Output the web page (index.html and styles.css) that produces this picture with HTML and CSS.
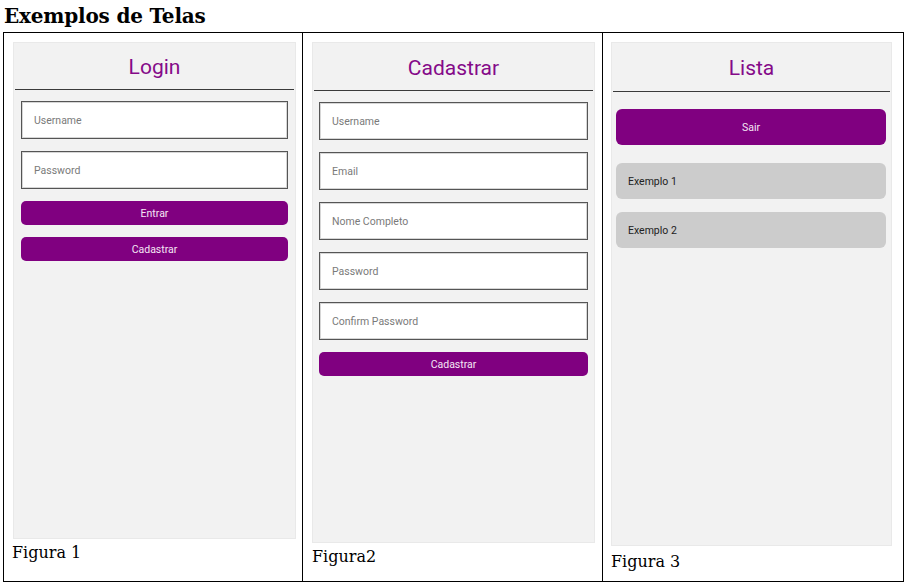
FILE: index.html
```html
<!DOCTYPE html>
<html lang="pt">
<head>
<meta charset="utf-8">
<title>Exemplos de Telas</title>
<link rel="stylesheet" href="styles.css">
</head>
<body>
<h1 class="title">Exemplos de Telas</h1>
<div class="table">
  <div class="cell cell-1">
    <div class="screen screen-1">
      <div class="header">Login</div>
      <div class="body body-login">
        <div class="input">Username</div>
        <div class="input">Password</div>
        <div class="btn">Entrar</div>
        <div class="btn">Cadastrar</div>
      </div>
    </div>
    <div class="caption">Figura 1</div>
  </div>
  <div class="cell cell-2">
    <div class="screen screen-2">
      <div class="header">Cadastrar</div>
      <div class="body body-cad">
        <div class="input">Username</div>
        <div class="input">Email</div>
        <div class="input">Nome Completo</div>
        <div class="input">Password</div>
        <div class="input">Confirm Password</div>
        <div class="btn">Cadastrar</div>
      </div>
    </div>
    <div class="caption">Figura2</div>
  </div>
  <div class="cell cell-3">
    <div class="screen screen-3">
      <div class="header">Lista</div>
      <div class="body body-list">
        <div class="btn btn-big">Sair</div>
        <div class="item">Exemplo 1</div>
        <div class="item">Exemplo 2</div>
      </div>
    </div>
    <div class="caption">Figura 3</div>
  </div>
</div>
</body>
</html>
```
FILE: styles.css
```css
* { box-sizing: border-box; }
html, body { margin: 0; padding: 0; background: #fff; }
body { width: 907px; height: 585px; overflow: hidden; }

.title {
  margin: 0;
  padding: 3px 0 0 4px;
  height: 32px;
  font-family: "DejaVu Serif", serif;
  font-weight: bold;
  font-size: 20px;
  line-height: 26px;
  color: #000;
  letter-spacing: -0.2px;
}

.table {
  margin-left: 3px;
  width: 901px;
  height: 550px;
  border: 1px solid #000;
  display: grid;
  grid-template-columns: 298px 300px 301px;
}

.cell {
  display: flex;
  flex-direction: column;
  padding-top: 9px;
}
.cell-1 { padding-left: 9px; padding-right: 6px; }
.cell-2 { border-left: 1px solid #000; padding-left: 9px; padding-right: 7px; }
.cell-3 { border-left: 1px solid #000; padding-left: 8px; padding-right: 11px; }

.screen {
  background: #f2f2f2;
  border: 1px solid #e9e9e9;
  display: flex;
  flex-direction: column;
}
.screen-1 { height: 497px; }
.screen-2 { height: 501px; }
.screen-3 { height: 504px; }

.header {
  height: 47px;
  margin: 0 1px;
  border-bottom: 1px solid #3a3a3a;
  display: flex;
  align-items: center;
  justify-content: center;
  padding-top: 2px;
  font-family: Roboto, "Liberation Sans", sans-serif;
  font-size: 21px;
  color: #850a89;
}
.screen-2 .header { height: 48px; }
.screen-3 .header { height: 49px; }

.body {
  display: flex;
  flex-direction: column;
  font-family: Roboto, "Liberation Sans", sans-serif;
}
.body-login { padding: 11px 7px 0 7px; gap: 12px; }
.body-cad { padding: 11px 6px 0 6px; gap: 12px; }
.body-list { padding: 17px 5px 0 4px; gap: 18px; }

.input {
  height: 38px;
  background: #fff;
  border: 1px solid #555;
  box-shadow: inset 0 0 0 1px #d6d6d6;
  display: flex;
  align-items: center;
  padding-left: 12px;
  font-size: 10.5px;
  color: #7a7a7a;
}

.btn {
  height: 24px;
  background: #800080;
  border-radius: 5px;
  display: flex;
  align-items: center;
  justify-content: center;
  color: #f4e6f4;
  font-size: 10.5px;
}
.btn-big { height: 36px; border-radius: 6px; }

.item {
  height: 36px;
  background: #cccccc;
  border-radius: 6px;
  display: flex;
  align-items: center;
  padding-left: 12px;
  font-size: 10.5px;
  color: #222;
}
.body-list .item + .item { margin-top: -5px; }

.caption {
  font-family: "DejaVu Serif", serif;
  font-size: 16px;
  color: #000;
  line-height: 22px;
  padding-top: 3px;
}
.cell-1 .caption { margin-left: -1px; }
.cell-3 .caption { padding-top: 5px; }
```
